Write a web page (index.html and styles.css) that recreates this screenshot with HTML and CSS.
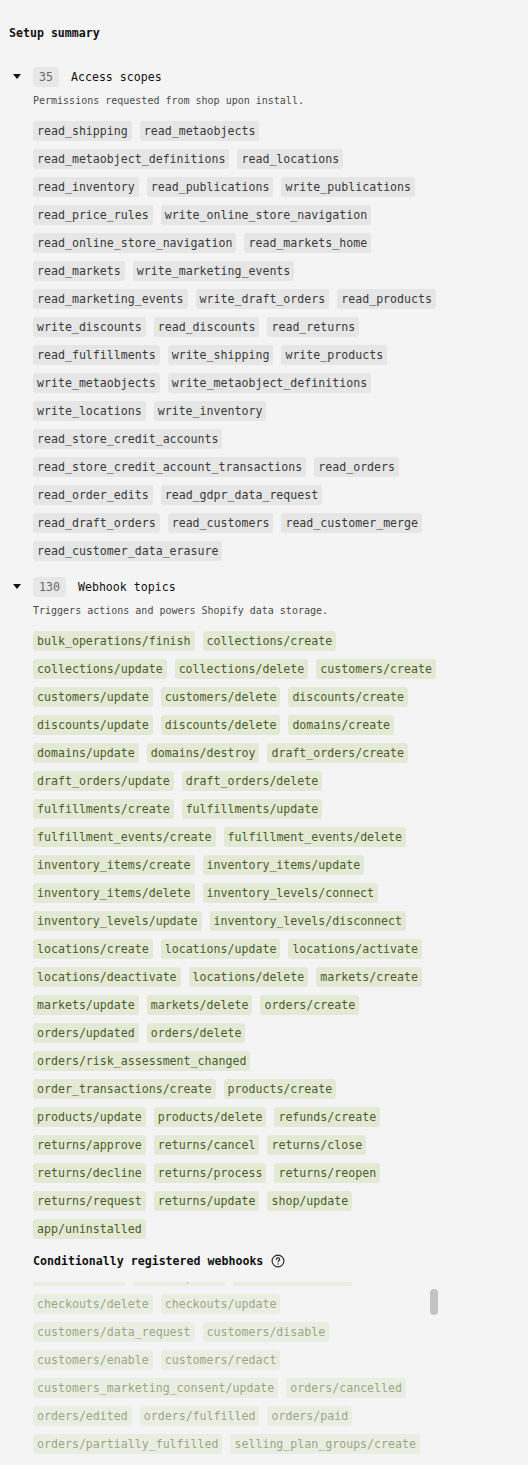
FILE: index.html
```html
<!DOCTYPE html>
<html lang="en">
<head>
<meta charset="utf-8">
<title>Setup summary</title>
<link rel="stylesheet" href="styles.css">
</head>
<body>
<main class="page">
  <h1 class="page-title">Setup summary</h1>

  <section class="section">
    <div class="section-head">
      <span class="caret"></span>
      <span class="count">35</span>
      <span class="section-title">Access scopes</span>
    </div>
    <div class="section-body">
      <p class="desc">Permissions requested from shop upon install.</p>
      <ul class="chips">
        <li class="chip">read_shipping</li>
        <li class="chip">read_metaobjects</li>
        <li class="chip">read_metaobject_definitions</li>
        <li class="chip">read_locations</li>
        <li class="chip">read_inventory</li>
        <li class="chip">read_publications</li>
        <li class="chip">write_publications</li>
        <li class="chip">read_price_rules</li>
        <li class="chip">write_online_store_navigation</li>
        <li class="chip">read_online_store_navigation</li>
        <li class="chip">read_markets_home</li>
        <li class="chip">read_markets</li>
        <li class="chip">write_marketing_events</li>
        <li class="chip">read_marketing_events</li>
        <li class="chip">write_draft_orders</li>
        <li class="chip">read_products</li>
        <li class="chip">write_discounts</li>
        <li class="chip">read_discounts</li>
        <li class="chip">read_returns</li>
        <li class="chip">read_fulfillments</li>
        <li class="chip">write_shipping</li>
        <li class="chip">write_products</li>
        <li class="chip">write_metaobjects</li>
        <li class="chip">write_metaobject_definitions</li>
        <li class="chip">write_locations</li>
        <li class="chip">write_inventory</li>
        <li class="chip">read_store_credit_accounts</li>
        <li class="chip">read_store_credit_account_transactions</li>
        <li class="chip">read_orders</li>
        <li class="chip">read_order_edits</li>
        <li class="chip">read_gdpr_data_request</li>
        <li class="chip">read_draft_orders</li>
        <li class="chip">read_customers</li>
        <li class="chip">read_customer_merge</li>
        <li class="chip">read_customer_data_erasure</li>
      </ul>
    </div>
  </section>

  <section class="section">
    <div class="section-head">
      <span class="caret"></span>
      <span class="count">130</span>
      <span class="section-title">Webhook topics</span>
    </div>
    <div class="section-body">
      <p class="desc">Triggers actions and powers Shopify data storage.</p>
      <ul class="chips">
        <li class="chip green">bulk_operations/finish</li>
        <li class="chip green">collections/create</li>
        <li class="chip green">collections/update</li>
        <li class="chip green">collections/delete</li>
        <li class="chip green">customers/create</li>
        <li class="chip green">customers/update</li>
        <li class="chip green">customers/delete</li>
        <li class="chip green">discounts/create</li>
        <li class="chip green">discounts/update</li>
        <li class="chip green">discounts/delete</li>
        <li class="chip green">domains/create</li>
        <li class="chip green">domains/update</li>
        <li class="chip green">domains/destroy</li>
        <li class="chip green">draft_orders/create</li>
        <li class="chip green">draft_orders/update</li>
        <li class="chip green">draft_orders/delete</li>
        <li class="chip green">fulfillments/create</li>
        <li class="chip green">fulfillments/update</li>
        <li class="chip green">fulfillment_events/create</li>
        <li class="chip green">fulfillment_events/delete</li>
        <li class="chip green">inventory_items/create</li>
        <li class="chip green">inventory_items/update</li>
        <li class="chip green">inventory_items/delete</li>
        <li class="chip green">inventory_levels/connect</li>
        <li class="chip green">inventory_levels/update</li>
        <li class="chip green">inventory_levels/disconnect</li>
        <li class="chip green">locations/create</li>
        <li class="chip green">locations/update</li>
        <li class="chip green">locations/activate</li>
        <li class="chip green">locations/deactivate</li>
        <li class="chip green">locations/delete</li>
        <li class="chip green">markets/create</li>
        <li class="chip green">markets/update</li>
        <li class="chip green">markets/delete</li>
        <li class="chip green">orders/create</li>
        <li class="chip green">orders/updated</li>
        <li class="chip green">orders/delete</li>
        <li class="chip green">orders/risk_assessment_changed</li>
        <li class="chip green">order_transactions/create</li>
        <li class="chip green">products/create</li>
        <li class="chip green">products/update</li>
        <li class="chip green">products/delete</li>
        <li class="chip green">refunds/create</li>
        <li class="chip green">returns/approve</li>
        <li class="chip green">returns/cancel</li>
        <li class="chip green">returns/close</li>
        <li class="chip green">returns/decline</li>
        <li class="chip green">returns/process</li>
        <li class="chip green">returns/reopen</li>
        <li class="chip green">returns/request</li>
        <li class="chip green">returns/update</li>
        <li class="chip green">shop/update</li>
        <li class="chip green">app/uninstalled</li>
      </ul>

      <h2 class="sub-title">Conditionally registered webhooks
        <svg class="help" width="14" height="14" viewBox="0 0 14 14" aria-hidden="true">
          <circle cx="7" cy="7" r="5.9" fill="none" stroke="#222" stroke-width="1.1"/>
          <path d="M5.3 5.5 C5.3 4.5 6.1 3.9 7 3.9 C7.9 3.9 8.7 4.5 8.7 5.4 C8.7 6.4 7.1 6.6 7.1 7.8" fill="none" stroke="#222" stroke-width="1.1" stroke-linecap="round"/>
          <circle cx="7.1" cy="9.9" r="0.7" fill="#222"/>
        </svg>
      </h2>

      <div class="scroll-box">
        <ul class="chips scrolled">
          <li class="chip faded">carts/create</li>
          <li class="chip faded">carts/update</li>
          <li class="chip faded">checkouts/create</li>
          <li class="chip faded">checkouts/delete</li>
          <li class="chip faded">checkouts/update</li>
          <li class="chip faded">customers/data_request</li>
          <li class="chip faded">customers/disable</li>
          <li class="chip faded">customers/enable</li>
          <li class="chip faded">customers/redact</li>
          <li class="chip faded">customers_marketing_consent/update</li>
          <li class="chip faded">orders/cancelled</li>
          <li class="chip faded">orders/edited</li>
          <li class="chip faded">orders/fulfilled</li>
          <li class="chip faded">orders/paid</li>
          <li class="chip faded">orders/partially_fulfilled</li>
          <li class="chip faded">selling_plan_groups/create</li>
          <li class="chip faded">selling_plan_groups/update</li>
          <li class="chip faded">subscription_contracts/create</li>
        </ul>
        <span class="thumb"></span>
      </div>
    </div>
  </section>
</main>
</body>
</html>
```

FILE: styles.css
```css
html, body {
  margin: 0;
  padding: 0;
  background: #f4f4f4;
}

body {
  font-family: "DejaVu Sans Mono", "Liberation Mono", monospace;
  font-size: 11.6px;
  color: #1a1a1a;
}

.page {
  width: 438px;
  padding: 25px 0 0 0;
  box-sizing: border-box;
}

.page-title {
  margin: 0 0 0 9px;
  font-size: 11.6px;
  line-height: 16px;
  font-weight: bold;
  color: #111;
}

.section {
  margin-top: 26px;
}

.section + .section {
  margin-top: 16px;
}

.section-head {
  display: flex;
  align-items: center;
  gap: 12px;
  padding-left: 13px;
  height: 20px;
}

.caret {
  width: 0;
  height: 0;
  border-left: 4px solid transparent;
  border-right: 4px solid transparent;
  border-top: 5px solid #111;
  margin-top: -1px;
}

.count {
  display: inline-flex;
  align-items: center;
  height: 20px;
  padding: 0 6px;
  border-radius: 4px;
  background: #e7e7e7;
  color: #6a6a6a;
  line-height: 20px;
}

.section-title {
  color: #111;
  line-height: 20px;
}

.section-body {
  padding-left: 33px;
}

.desc {
  margin: 7px 0 0 0;
  font-size: 10px;
  line-height: 14px;
  color: #4a4a4a;
}

.chips {
  list-style: none;
  margin: 13px 0 0 0;
  padding: 0;
  display: flex;
  flex-wrap: wrap;
  gap: 8px;
}

.chip {
  height: 20px;
  line-height: 20px;
  padding: 0 4px;
  border-radius: 3px;
  background: #e6e6e6;
  color: #3a3a3a;
  white-space: nowrap;
}

.chip.green {
  background: #e3e9d4;
  color: #4c5d2b;
}

.chip.faded {
  background: #eaeee2;
  color: #9ca687;
}

.sub-title {
  margin: 14px 0 0 0;
  display: flex;
  align-items: center;
  gap: 8px;
  font-size: 11.6px;
  line-height: 16px;
  font-weight: bold;
  color: #111;
}

.help {
  display: block;
}

.scroll-box {
  position: relative;
  margin-top: 13px;
  height: 180px;
  overflow: hidden;
  padding-right: 10px;
}

.chips.scrolled {
  margin-top: -16px;
}

.thumb {
  position: absolute;
  right: 0;
  top: 7px;
  width: 8px;
  height: 26px;
  border-radius: 4px;
  background: #c3c3c3;
}
```
